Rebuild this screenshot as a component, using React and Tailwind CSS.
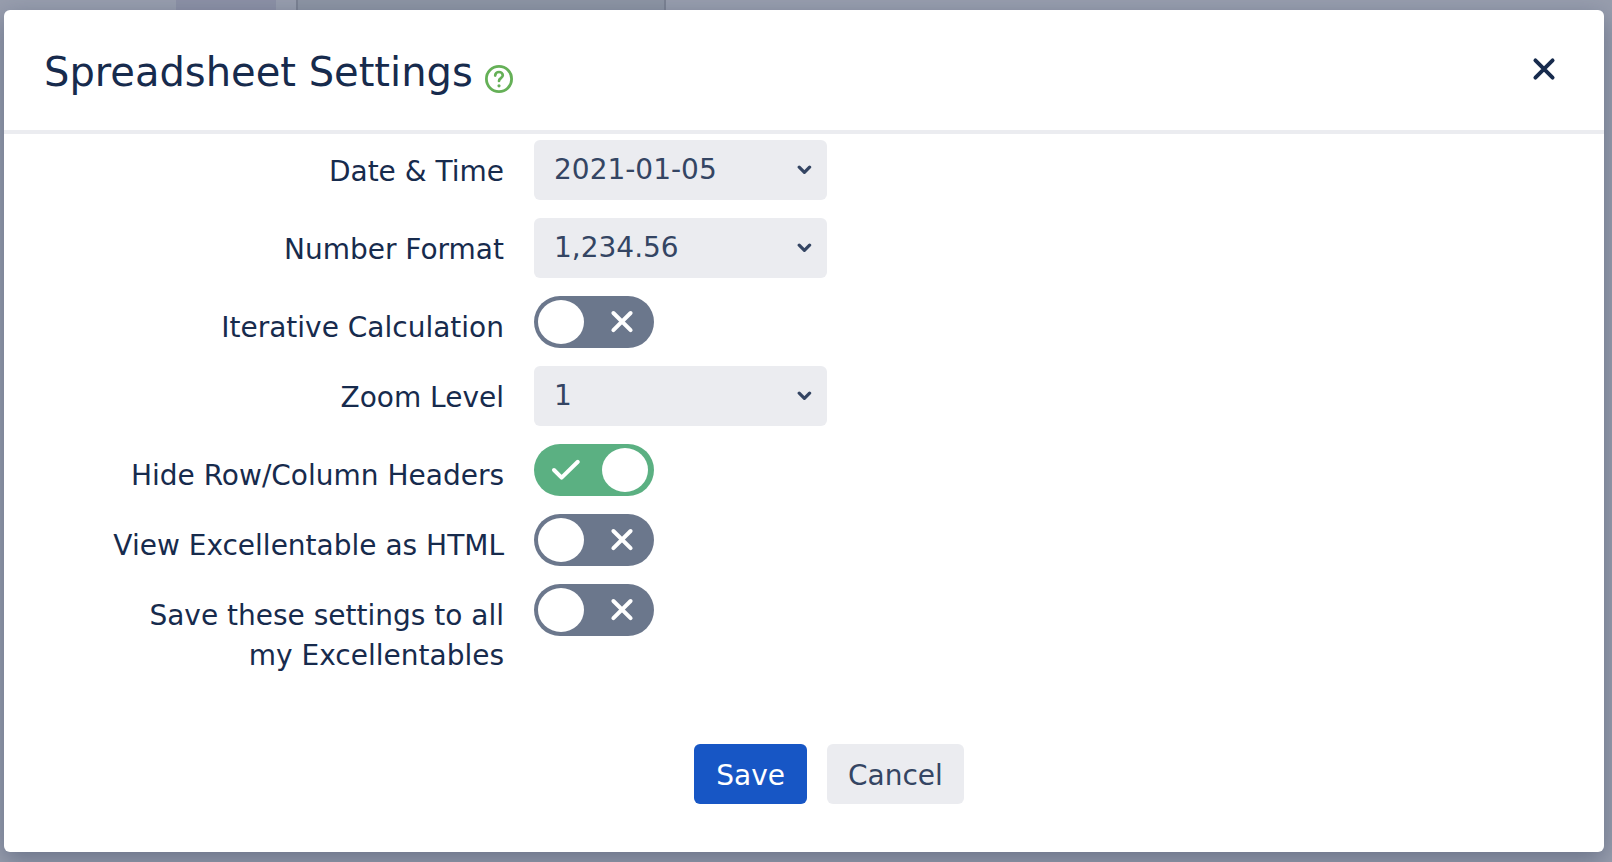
import { useState } from "react";

function Row({ id, label, children }) {
  return (
    <div className="flex items-start gap-[30px]">
      <label htmlFor={id} className="w-1/4 min-w-[400px] pt-3 text-right leading-10">
        {label}
      </label>
      {children}
    </div>
  );
}

function SelectField({ id, label, options }) {
  return (
    <Row id={id} label={label}>
      <div className="relative w-[293px]">
        <select
          id={id}
          className="block h-15 w-full appearance-none rounded-md bg-[#ebecf0] pl-5 pr-12 text-[#344563]"
        >
          {options.map((option) => (
            <option key={option}>{option}</option>
          ))}
        </select>
        <svg
          viewBox="0 0 16 12"
          className="pointer-events-none absolute right-[14px] top-6 h-3 w-4"
          fill="none"
          stroke="#344563"
          strokeWidth="3.2"
          strokeLinecap="round"
          strokeLinejoin="round"
        >
          <path d="M2.2 3.2 7.4 8.4l5.2-5.2" />
        </svg>
      </div>
    </Row>
  );
}

function ToggleField({ id, label, defaultChecked = false }) {
  const [checked, setChecked] = useState(defaultChecked);
  return (
    <Row id={id} label={label}>
      <div className="relative h-13 w-30">
        <input
          id={id}
          type="checkbox"
          checked={checked}
          onChange={(e) => setChecked(e.target.checked)}
          className="block h-full w-full cursor-pointer appearance-none rounded-full bg-[#6b778c] checked:bg-[#5bb082]"
        />
        <svg
          viewBox="0 0 120 52"
          className="pointer-events-none absolute inset-0 h-full w-full"
          fill="none"
          stroke="#fff"
          strokeWidth="4"
          strokeLinecap="round"
          strokeLinejoin="round"
        >
          {checked ? (
            <>
              <path d="M20 26 27.6 33.6 43.8 17.8" />
              <ellipse cx="91" cy="26" rx="23" ry="22" fill="#fff" stroke="none" />
            </>
          ) : (
            <>
              <ellipse cx="27" cy="26" rx="23" ry="22" fill="#fff" stroke="none" />
              <path d="m79.4 17 17.2 17.2m0-17.2-17.2 17.2" />
            </>
          )}
        </svg>
      </div>
    </Row>
  );
}

export default function App() {
  return (
    <div className="relative min-h-screen overflow-hidden bg-[#989eae] pt-[10px] pb-[10px] pl-1 pr-2 font-['DejaVu_Sans',Verdana,sans-serif] text-[28px] text-[#172b4d]">
      {/* page behind the dialog */}
      <div className="absolute left-44 top-0 h-5 w-25 bg-[#8c91a6]" />
      <div className="absolute left-74 top-0 h-5 w-[370px] border-x-2 border-[#7b8292] bg-[#8d95a4]" />

      <div
        role="dialog"
        aria-labelledby="settings-title"
        className="relative rounded-md bg-white shadow-[0_8px_24px_rgba(60,72,100,0.5)]"
      >
        <header className="flex h-31 items-center border-b-4 border-[#ebecf0] pl-10 pr-12">
          <h2 id="settings-title" className="pt-1 text-[40px] leading-none">
            Spreadsheet Settings
          </h2>
          <button type="button" aria-label="Help" className="ml-3 mt-[18px]">
            <svg viewBox="0 0 28 28" className="block h-7 w-7" fill="none" stroke="#65b057" strokeLinecap="round">
              <circle cx="14" cy="14" r="12.6" strokeWidth="2.8" />
              <path d="M10.2 10.6c0-2.2 1.7-3.6 3.8-3.6s3.8 1.4 3.8 3.3c0 2.8-3.8 2.8-3.8 5.6" strokeWidth="2.7" />
              <circle cx="14" cy="20.8" r="1.6" fill="#65b057" stroke="none" />
            </svg>
          </button>
          <button type="button" aria-label="Close" className="mb-0.5 ml-auto">
            <svg viewBox="0 0 24 24" className="block h-6 w-6" fill="none" stroke="#172b4d" strokeWidth="3.9" strokeLinecap="round">
              <path d="m3.4 3.4 17.2 17.2m0-17.2L3.4 20.6" />
            </svg>
          </button>
        </header>

        <form onSubmit={(e) => e.preventDefault()}>
          <div className="flex flex-col gap-[18px] pl-25 pt-[6px]">
            <SelectField id="date-time" label="Date & Time" options={["2021-01-05", "01/05/2021", "05/01/2021"]} />
            <SelectField id="number-format" label="Number Format" options={["1,234.56", "1.234,56"]} />
            <ToggleField id="iterative" label="Iterative Calculation" />
            <SelectField id="zoom" label="Zoom Level" options={["1", "1.5", "2"]} />
            <ToggleField id="hide-headers" label="Hide Row/Column Headers" defaultChecked />
            <ToggleField id="view-html" label="View Excellentable as HTML" />
            <ToggleField id="save-all" label="Save these settings to all my Excellentables" />
          </div>

          <footer className="flex justify-center gap-5 pb-12 pt-17 pl-[50px]">
            <button type="submit" className="h-15 rounded-md bg-[#1756c5] px-[22px] pt-1 text-white">
              Save
            </button>
            <button type="button" className="h-15 rounded-md bg-[#ebecf0] px-[21px] pt-1 text-[#344563]">
              Cancel
            </button>
          </footer>
        </form>
      </div>
    </div>
  );
}
